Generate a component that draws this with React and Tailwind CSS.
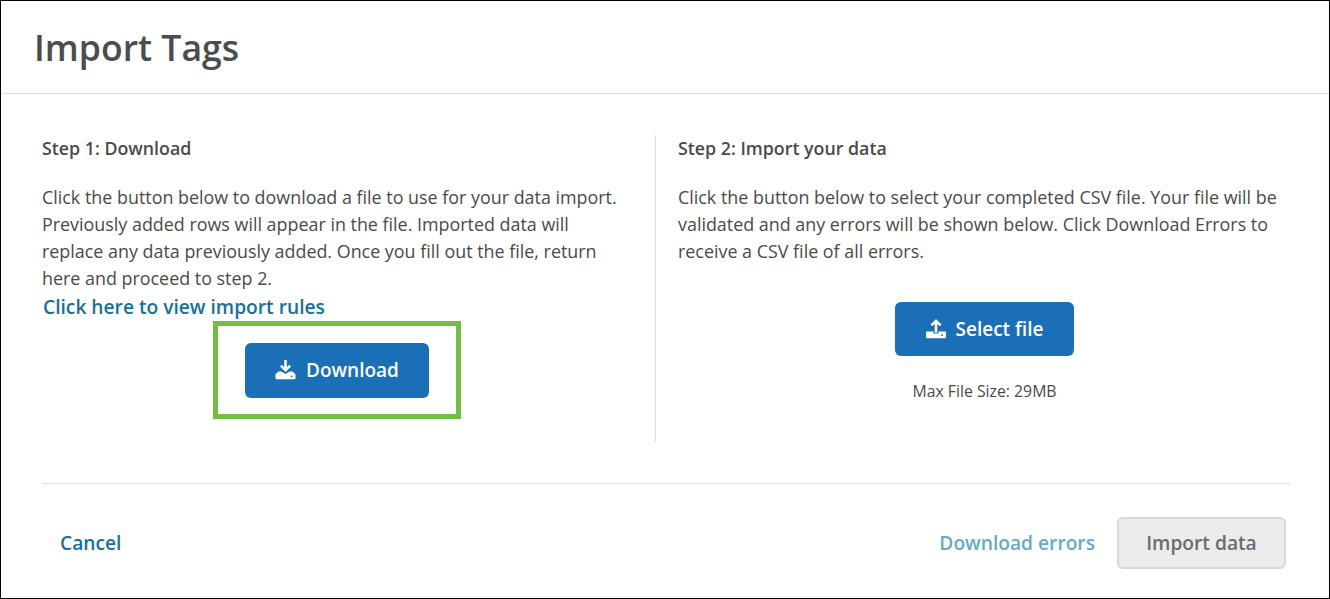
function DownloadIcon() {
  return (
    <svg width="21" height="20" viewBox="0 0 21 20" fill="white" className="shrink-0">
      <rect x="9.2" y="0" width="2.6" height="9" />
      <path d="M5 6.5 L6.8 4.8 L10.5 8.5 L14.2 4.8 L16 6.5 L10.5 12 Z" />
      <path fillRule="evenodd" d="M3.5 11.5 L6.5 11.5 L10.5 14 L14.5 11.5 L17.5 11.5 L20.5 14.2 L20.5 18 Q20.5 19.2 19.5 19.2 L1.5 19.2 Q0.5 19.2 0.5 18 L0.5 14.2 Z M15.7 16.4 a0.9 0.9 0 1 0 1.8 0 a0.9 0.9 0 1 0 -1.8 0 Z" />
    </svg>
  );
}

function UploadIcon() {
  return (
    <svg width="20" height="20" viewBox="0 0 20 20" fill="white" className="shrink-0">
      <path d="M10 0 L15.5 5.5 L13.7 7.2 L11.3 4.8 L11.3 13.5 L8.7 13.5 L8.7 4.8 L6.3 7.2 L4.5 5.5 Z" />
      <path fillRule="evenodd" d="M0 13.6 Q0 12.4 1.2 12.4 L7.5 12.4 L7.5 14.5 L12.5 14.5 L12.5 12.4 L18.8 12.4 Q20 12.4 20 13.6 L20 18 Q20 19.2 18.8 19.2 L1.2 19.2 Q0 19.2 0 18 Z M15.2 16.2 a0.9 0.9 0 1 0 1.8 0 a0.9 0.9 0 1 0 -1.8 0 Z" />
    </svg>
  );
}

export default function App() {
  return (
    <div className="w-[1330px] h-[599px] border border-black bg-white flex flex-col text-[#4a4a4a] font-['Open_Sans',sans-serif] overflow-hidden">
      <header className="h-[93px] shrink-0 border-b border-[#dedede] pl-[33px] flex items-center">
        <h1 className="text-[35.6px] leading-[46px] font-semibold text-[#4a4d50] -mt-[1px]">Import Tags</h1>
      </header>

      <main className="flex-1 flex flex-col px-[41px] pr-[38px]">
        <div className="flex mt-[41px] h-[307px]">
          <section className="w-[614px] shrink-0 border-r border-[#dedede] flex flex-col">
            <h2 className="text-[17.8px] leading-[27px] font-semibold">Step 1: Download</h2>
            <p className="mt-[22px] max-w-[580px] text-[17.9px] leading-[27px]">
              Click the button below to download a file to use for your data import. Previously added rows will appear in the file. Imported data will replace any data previously added. Once you fill out the file, return here and proceed to step 2.
            </p>
            <a className="ml-[1px] mt-[1px] text-[19.2px] leading-[28px] font-semibold text-[#17709a]">Click here to view import rules</a>
            <div className="self-center -ml-[23px] w-[248px] h-[98px] border-[5px] border-[#72bd43] flex items-center justify-center">
              <button className="w-[184px] h-[55px] rounded-[6px] bg-[#1a6fb7] text-white text-[19px] font-semibold flex items-center justify-center gap-[10px]">
                <DownloadIcon />
                Download
              </button>
            </div>
          </section>

          <section className="flex-1 pl-[22px] flex flex-col">
            <h2 className="text-[17.8px] leading-[27px] font-semibold">Step 2: Import your data</h2>
            <p className="mt-[22px] text-[17.9px] leading-[27px]">
              Click the button below to select your completed CSV file. Your file will be validated and any errors will be shown below. Click Download Errors to receive a CSV file of all errors.
            </p>
            <button className="self-center mt-[37px] w-[179px] h-[54px] rounded-[6px] bg-[#1a6fb7] text-white text-[19px] font-semibold flex items-center justify-center gap-[10px]">
              <UploadIcon />
              Select file
            </button>
            <p className="self-center mt-[23px] text-[15.8px] leading-[24px]">Max File Size: 29MB</p>
          </section>
        </div>

        <div className="mt-[41px] border-t border-[#dedede] flex-1 flex items-start justify-between">
          <a className="ml-[18px] mt-[45px] text-[19.2px] leading-[28px] font-semibold text-[#17709a]">Cancel</a>
          <div className="flex items-center gap-[22px] mt-[33px] mr-[5px]">
            <a className="text-[19.2px] leading-[28px] font-semibold text-[#65a9c7]">Download errors</a>
            <button className="w-[169px] h-[52px] rounded-[6px] border-2 border-[#d8d8d8] bg-[#ececec] text-[#6b6b6b] text-[19.2px] font-semibold">Import data</button>
          </div>
        </div>
      </main>
    </div>
  );
}
